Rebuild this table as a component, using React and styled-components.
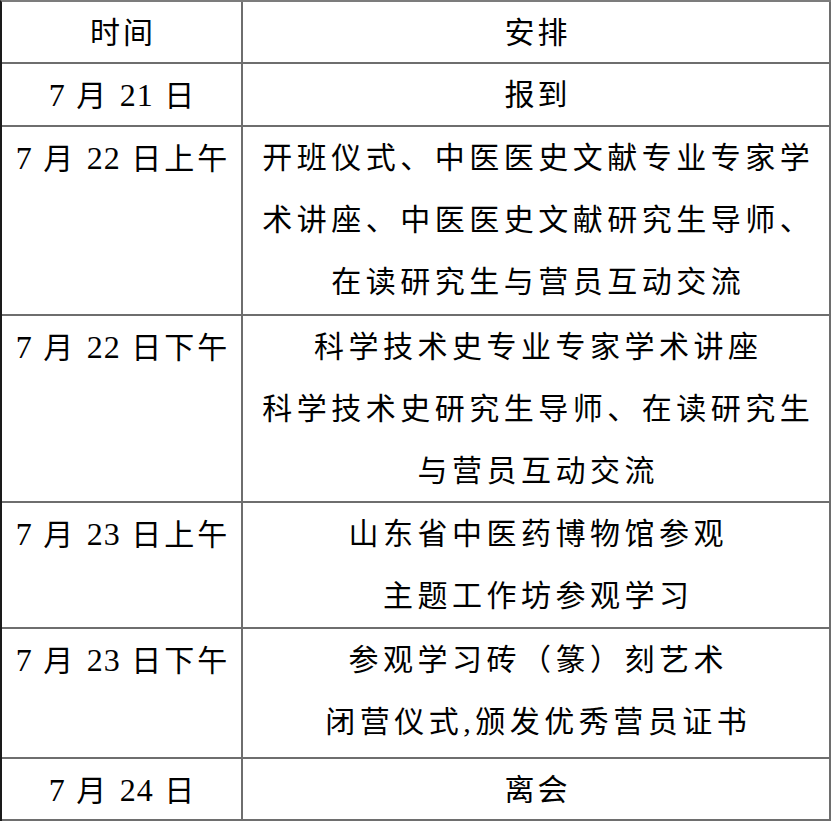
import React from 'react';
import styled, { createGlobalStyle } from 'styled-components';

const GlobalStyle = createGlobalStyle`
  html, body {
    margin: 0;
    padding: 0;
    background: #ffffff;
  }
  body {
    font-family: 'Liberation Serif', 'Noto Sans CJK SC', serif;
    color: #000000;
  }
`;

const Table = styled.div`
  width: 831px;
  display: grid;
  grid-template-columns: 241px 1fr;
  border-top: 2px solid #7c7c7c;
  border-left: 2px solid #1a1a1a;
  box-sizing: border-box;
`;

const Cell = styled.div`
  height: ${(p) => p.$height}px;
  box-sizing: border-box;
  border-right: 2px solid #6e6e6e;
  border-bottom: 2px solid #6e6e6e;
  display: flex;
  flex-direction: column;
  align-items: center;
  overflow: hidden;
`;

const Line = styled.div`
  height: 62px;
  line-height: 62px;
  font-size: 30px;
  font-weight: 400;
  white-space: nowrap;
  letter-spacing: ${(p) => (p.$tight ? 3 : 4.5)}px;
  margin-right: ${(p) => (p.$tight ? -3 : -4.5)}px;
`;

const Num = styled.span`
  font-size: 32px;
  letter-spacing: 1px;
`;

// digits are set a bit larger, in the serif face
function DateText({ text }) {
  return text.split(/(\d+)/).map((part, i) =>
    /^\d+$/.test(part) ? <Num key={i}>{part}</Num> : <span key={i}>{part}</span>
  );
}

const rows = [
  { height: 62, time: '时间', plan: ['安排'], tight: true },
  { height: 63, time: '7 月 21 日', plan: ['报到'], tight: true },
  {
    height: 189,
    time: '7 月 22 日上午',
    plan: [
      '开班仪式、中医医史文献专业专家学',
      '术讲座、中医医史文献研究生导师、',
      '在读研究生与营员互动交流',
    ],
  },
  {
    height: 187,
    time: '7 月 22 日下午',
    plan: [
      '科学技术史专业专家学术讲座',
      '科学技术史研究生导师、在读研究生',
      '与营员互动交流',
    ],
  },
  {
    height: 126,
    time: '7 月 23 日上午',
    plan: ['山东省中医药博物馆参观', '主题工作坊参观学习'],
  },
  {
    height: 130,
    time: '7 月 23 日下午',
    plan: ['参观学习砖（篆）刻艺术', '闭营仪式,颁发优秀营员证书'],
  },
  { height: 62, time: '7 月 24 日', plan: ['离会'], tight: true },
];

export default function App() {
  return (
    <>
      <GlobalStyle />
      <Table>
        {rows.map((row, i) => (
          <React.Fragment key={i}>
            <Cell $height={row.height}>
              <Line $tight>
                <DateText text={row.time} />
              </Line>
            </Cell>
            <Cell $height={row.height}>
              {row.plan.map((text, j) => (
                <Line key={j} $tight={row.tight}>
                  {text}
                </Line>
              ))}
            </Cell>
          </React.Fragment>
        ))}
      </Table>
    </>
  );
}
